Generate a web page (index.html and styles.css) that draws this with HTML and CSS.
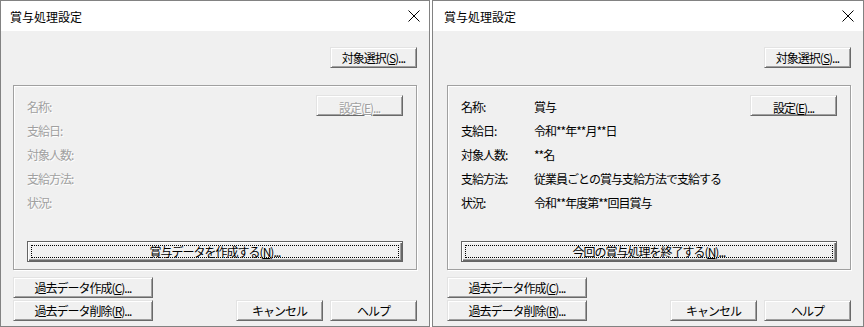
FILE: index.html
```html
<!DOCTYPE html>
<html>
<head>
  <meta charset="utf-8">
  <title>賞与処理設定</title>
  <link rel="stylesheet" href="styles.css">
</head>
<body>
  <div class="dialog">
    <div class="titlebar">
      <span class="title">賞与処理設定</span>
      <svg class="close" width="12" height="12" viewBox="0 0 12 12"><path d="M0.5 0.5L11.5 11.5M11.5 0.5L0.5 11.5" stroke="#000" stroke-width="1" fill="none"/></svg>
    </div>
    <div class="body">
      <div class="top-row"><button class="btn">対象選択(<u>S</u>)...</button></div>
      <div class="group off">
        <div class="row"><span class="label">名称:</span><button class="btn set" disabled>設定(<u>E</u>)...</button></div>
        <div class="row"><span class="label">支給日:</span></div>
        <div class="row"><span class="label">対象人数:</span></div>
        <div class="row"><span class="label">支給方法:</span></div>
        <div class="row"><span class="label">状況:</span></div>
        <button class="btn default"><span class="focus">賞与データを作成する(<u>N</u>)...</span></button>
      </div>
      <div class="bottom">
        <div class="bottom-row"><button class="btn past">過去データ作成(<u>C</u>)...</button></div>
        <div class="bottom-row">
          <button class="btn past">過去データ削除(<u>R</u>)...</button>
          <button class="btn">キャンセル</button>
          <button class="btn">ヘルプ</button>
        </div>
      </div>
    </div>
  </div>

  <div class="dialog second">
    <div class="titlebar">
      <span class="title">賞与処理設定</span>
      <svg class="close" width="12" height="12" viewBox="0 0 12 12"><path d="M0.5 0.5L11.5 11.5M11.5 0.5L0.5 11.5" stroke="#000" stroke-width="1" fill="none"/></svg>
    </div>
    <div class="body">
      <div class="top-row"><button class="btn">対象選択(<u>S</u>)...</button></div>
      <div class="group">
        <div class="row"><span class="label">名称:</span><span class="value">賞与</span><button class="btn set">設定(<u>E</u>)...</button></div>
        <div class="row"><span class="label">支給日:</span><span class="value">令和**年**月**日</span></div>
        <div class="row"><span class="label">対象人数:</span><span class="value">**名</span></div>
        <div class="row"><span class="label">支給方法:</span><span class="value">従業員ごとの賞与支給方法で支給する</span></div>
        <div class="row"><span class="label">状況:</span><span class="value">令和**年度第**回目賞与</span></div>
        <button class="btn default"><span class="focus">今回の賞与処理を終了する(<u>N</u>)...</span></button>
      </div>
      <div class="bottom">
        <div class="bottom-row"><button class="btn past">過去データ作成(<u>C</u>)...</button></div>
        <div class="bottom-row">
          <button class="btn past">過去データ削除(<u>R</u>)...</button>
          <button class="btn">キャンセル</button>
          <button class="btn">ヘルプ</button>
        </div>
      </div>
    </div>
  </div>
</body>
</html>
```

FILE: styles.css
```css
body {
  margin: 0;
  background: #fff;
  display: flex;
  gap: 2px;
  font-family: "Noto Sans CJK JP", sans-serif;
  color: #000;
}
.dialog {
  width: 430px;
  height: 327px;
  box-sizing: border-box;
  border: 1px solid #828282;
  background: #f0f0f0;
  display: flex;
  flex-direction: column;
}
.dialog.second {
  width: 432px;
}
.titlebar {
  height: 30px;
  flex: none;
  background: #fff;
  display: flex;
  align-items: center;
  justify-content: space-between;
  padding: 0 9px 0 9px;
  font-size: 12px;
}
.second .titlebar {
  padding: 0 9px 0 11px;
}
.body {
  flex: 1;
  padding: 16px 12px 0 12px;
  display: flex;
  flex-direction: column;
  font-size: 12px;
  letter-spacing: -1px;
}
.second .body {
  padding-left: 14px;
}
.top-row {
  display: flex;
  justify-content: flex-end;
  margin-bottom: 17px;
}
.btn {
  font: inherit;
  letter-spacing: inherit;
  color: #000;
  width: 87px;
  height: 21px;
  padding: 0;
  background: #f0f0f0;
  border: 1px solid;
  border-color: #e3e3e3 #696969 #696969 #e3e3e3;
  box-shadow: inset 1px 1px #fff, inset -1px -1px #a0a0a0;
  flex: none;
}
.btn:disabled {
  color: #a0a0a0;
  text-shadow: 1px 1px #fff;
}
.group {
  height: 185px;
  box-sizing: border-box;
  border: 1px solid #a0a0a0;
  box-shadow: 1px 1px 0 #fff, inset 1px 1px 0 #fff;
  padding: 9px 13px 7px 13px;
  margin-bottom: 7px;
  display: flex;
  flex-direction: column;
}
.row {
  display: flex;
  height: 24px;
  line-height: 24px;
}
.label {
  width: 73px;
  flex: none;
}
.off .label {
  color: #a0a0a0;
  text-shadow: 1px 1px #fff;
}
.set {
  margin-left: auto;
}
.default {
  width: 100%;
  margin-top: 26px;
  border: 1px solid #646464;
  box-shadow: inset 1px 1px #fff, inset -1px -1px #696969, inset -2px -2px #a0a0a0;
  padding: 3px;
  display: flex;
}
.focus {
  flex: 1;
  border: 1px dotted #000;
  display: flex;
  align-items: center;
  justify-content: center;
}
.bottom {
  display: flex;
  flex-direction: column;
  gap: 2px;
}
.bottom-row {
  display: flex;
  gap: 7px;
}
.past {
  width: 140px;
  margin-right: auto;
}
```
